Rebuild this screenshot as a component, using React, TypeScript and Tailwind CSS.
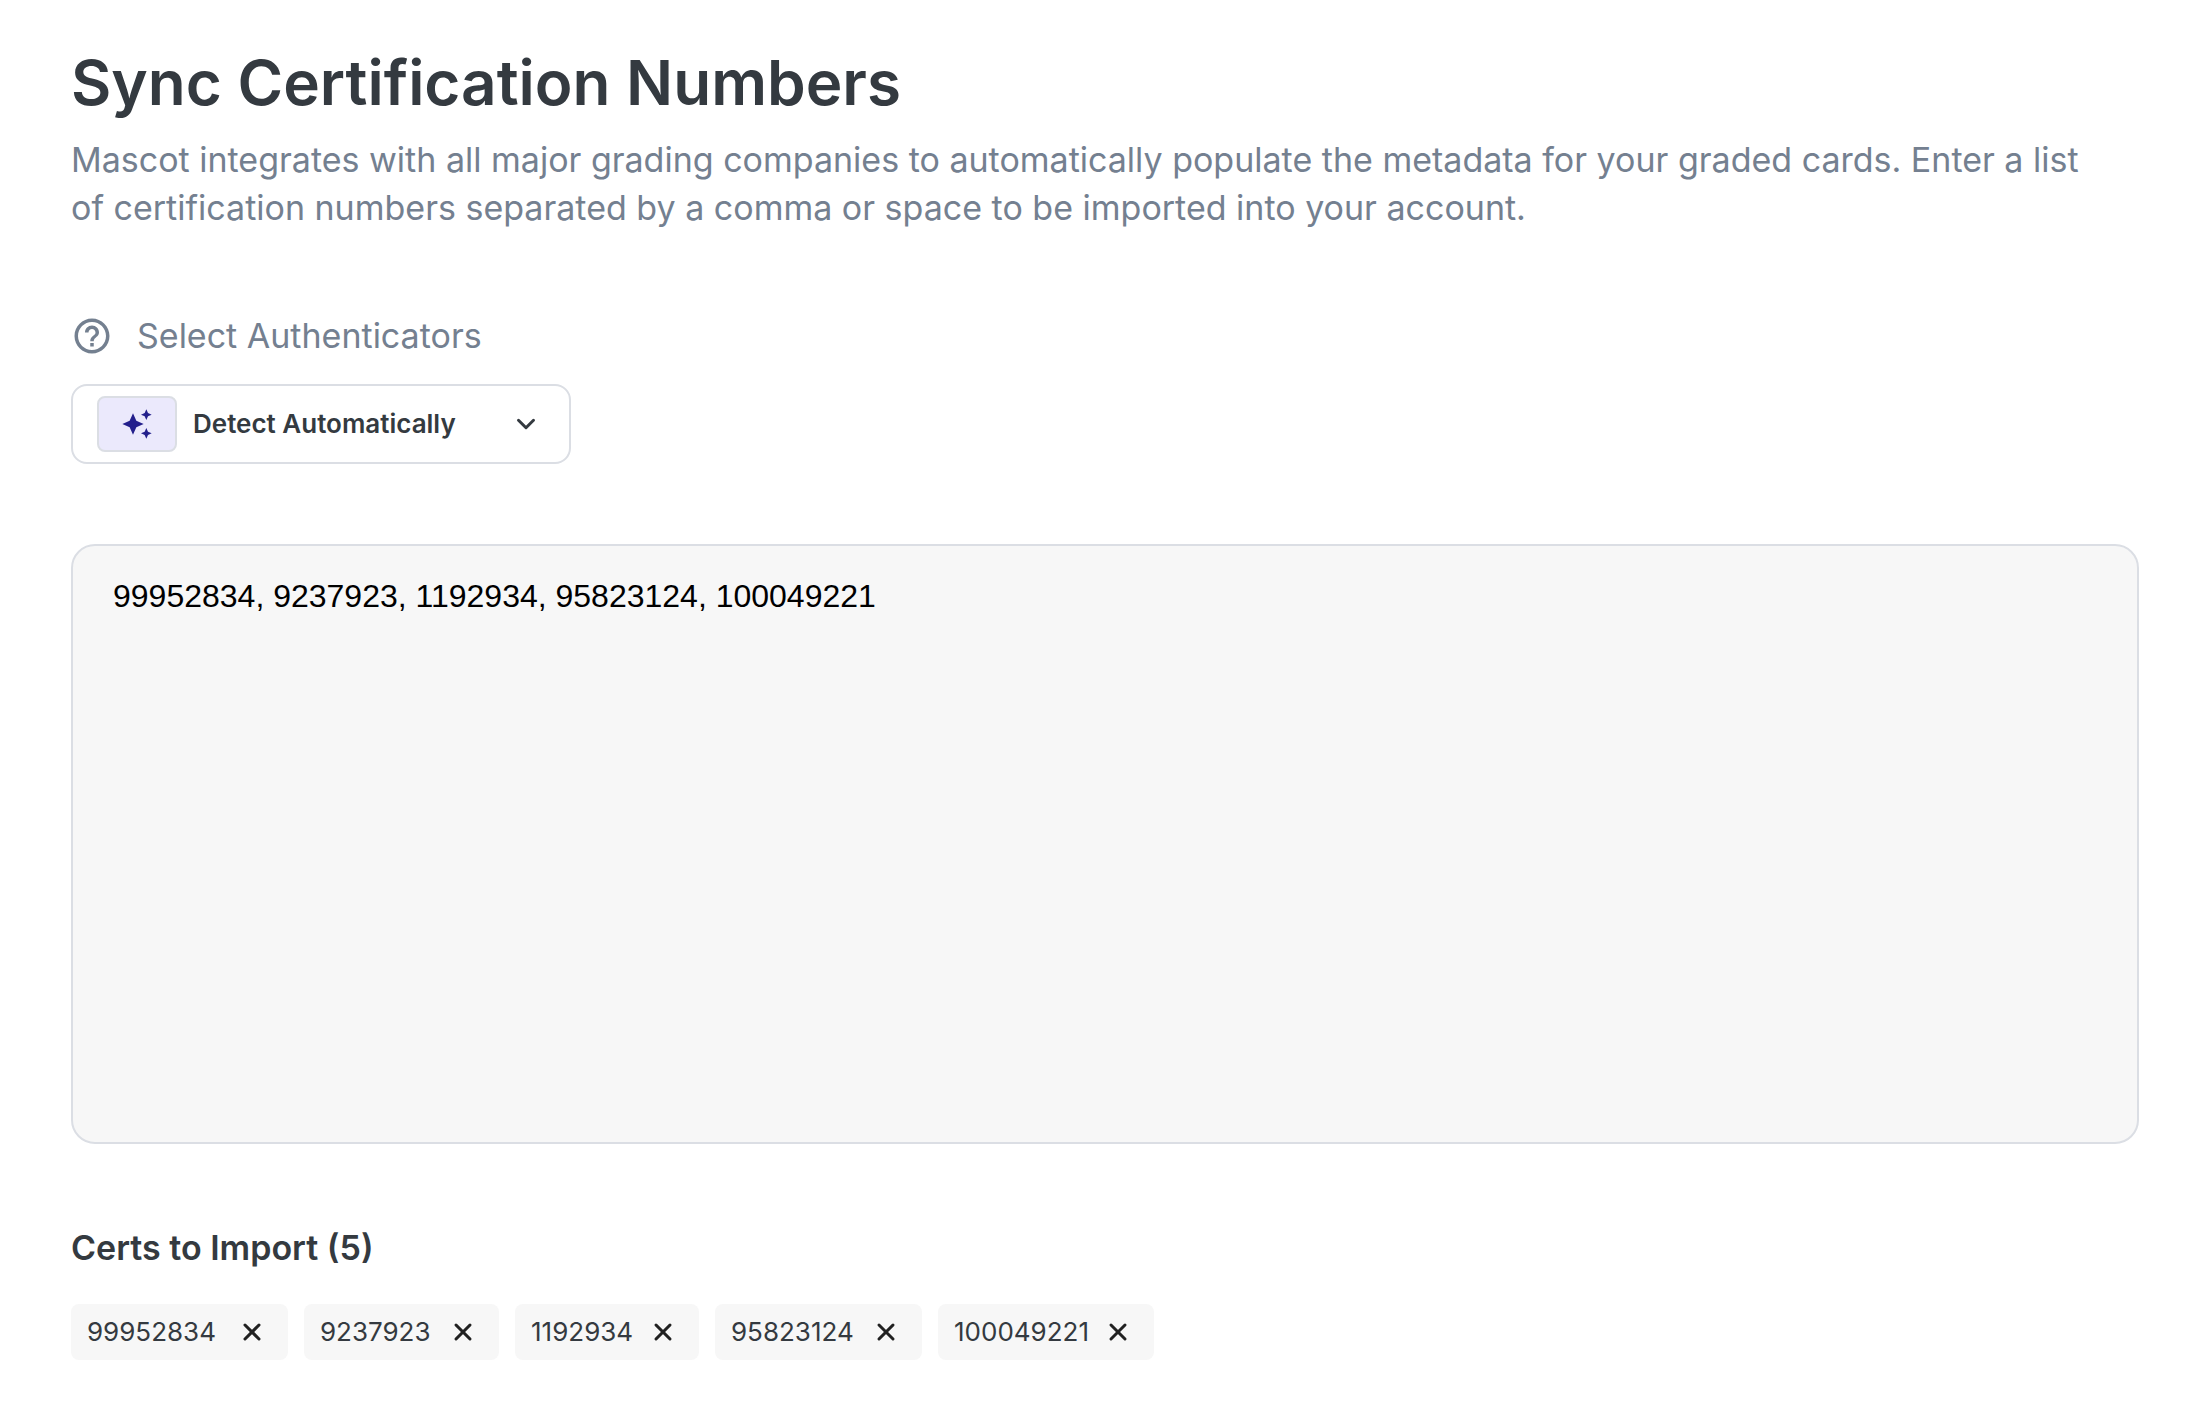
import { useState } from "react";
import { ChevronDown, X } from "lucide-react";
import { MdAutoAwesome, MdHelpOutline } from "react-icons/md";

const initialCerts = [
  { id: "99952834", width: "w-[217px]" },
  { id: "9237923", width: "w-[195px]" },
  { id: "1192934", width: "w-[184px]" },
  { id: "95823124", width: "w-[207px]" },
  { id: "100049221", width: "w-[216px]" },
];

export default function App() {
  const [certs, setCerts] = useState(initialCerts);
  return (
    <main className="pt-12 pr-[55px] pb-12 pl-[71px] font-['Inter',sans-serif] text-[34px] leading-12 text-[#343a40]">
      <h1 className="text-[62px] leading-[70px] font-semibold">Sync Certification Numbers</h1>
      <p className="mt-[18px] pr-8 text-[#748090]">
        Mascot integrates with all major grading companies to automatically populate the metadata for
        your graded cards. Enter a list of certification numbers separated by a comma or space to be
        imported into your account.
      </p>
      <div className="mt-20 flex items-center gap-6 text-[#748090]">
        <MdHelpOutline className="size-[42px]" />
        <label htmlFor="authenticator">Select Authenticators</label>
      </div>
      <div className="relative mt-6 flex h-20 w-[500px] items-center rounded-2xl border-2 border-[#dbdee4] pl-6">
        <span className="flex h-14 w-20 items-center justify-center rounded-lg border-2 border-[#dbdee4] bg-[#ebe9fc] text-[#231f8c]">
          <MdAutoAwesome className="size-8" />
        </span>
        <select
          id="authenticator"
          className="ml-4 flex-1 appearance-none bg-transparent text-[26px] leading-9 font-semibold outline-none"
        >
          <option>Detect Automatically</option>
        </select>
        <ChevronDown className="pointer-events-none absolute right-7 size-[30px]" strokeWidth={2.4} />
      </div>
      <textarea
        aria-label="Certification numbers"
        defaultValue="99952834, 9237923, 1192934, 95823124, 100049221"
        className="mt-20 block h-[600px] w-full resize-none rounded-3xl border-2 border-[#dbdee4] bg-[#f7f7f7] px-10 py-8 font-['Liberation_Sans',sans-serif] text-[32px] leading-9 text-black outline-none"
      />
      <h2 className="mt-20 font-semibold">Certs to Import ({certs.length})</h2>
      <ul className="mt-8 flex flex-wrap gap-4">
        {certs.map(({ id, width }) => (
          <li
            key={id}
            className={`flex h-14 items-center justify-between rounded-lg bg-[#f7f7f7] pr-3 pl-4 text-[26px] leading-9 ${width}`}
          >
            {id}
            <button
              type="button"
              aria-label={`Remove ${id}`}
              onClick={() => setCerts(certs.filter((c) => c.id !== id))}
              className="flex size-12 items-center justify-center text-[#212121]"
            >
              <X className="size-7" strokeWidth={2.6} />
            </button>
          </li>
        ))}
      </ul>
    </main>
  );
}
